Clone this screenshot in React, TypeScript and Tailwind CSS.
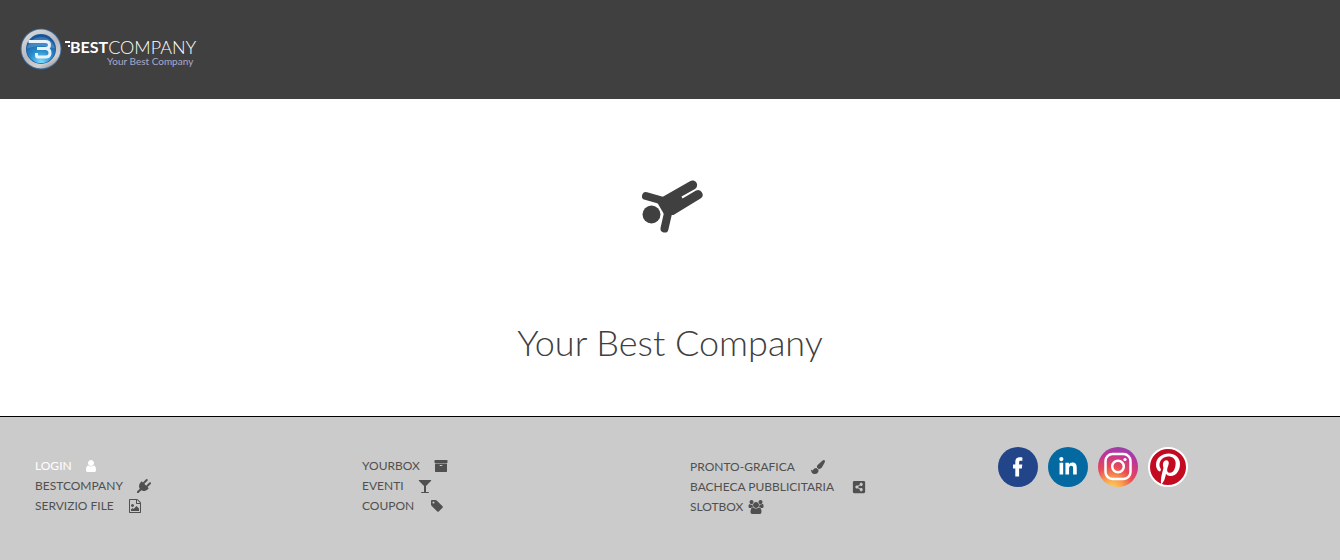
import type { ReactNode } from "react";
import { FaShareAltSquare, FaLinkedinIn, FaPinterestP } from "react-icons/fa";

type GlyphProps = { d: string; wide?: boolean };

function Glyph({ d, wide = false }: GlyphProps) {
  return (
    <svg
      aria-hidden="true"
      viewBox={wide ? "0 0 1920 1792" : "0 0 1792 1792"}
      className={wide ? "h-3.5 w-4 fill-current" : "size-3.5 fill-current"}
    >
      <path d={d} />
    </svg>
  );
}

const icons = {
  user: "M1536 1399q0 109-62.5 187t-150.5 78h-854q-88 0-150.5-78t-62.5-187q0-85 8.500-160.500t31.500-152 58.500-131 94-89 134.500-34.500q131 128 313 128t313-128q76 0 134.500 34.500t94 89 58.500 131 31.500 152 8.500 160.500zm-256-887q0 159-112.500 271.500t-271.500 112.500-271.500-112.500-112.500-271.500 112.500-271.500 271.500-112.500 271.500 112.500 112.500 271.500z",
  plug: "M1755 453q37 38 37 90.5t-37 90.5l-401 400 150 150-160 160q-163 163-389.5 186.5t-411.5-100.5l-362 362h-181v-181l362-362q-124-185-100.5-411.5t186.5-389.5l160-160 150 150 400-401q38-37 91-37t90 37 37 90.5-37 90.5l-400 401 234 234 401-400q38-37 91-37t90 37z",
  image: "M1596 380q28 28 48 76t20 88v1152q0 40-28 68t-68 28h-1344q-40 0-68-28t-28-68v-1600q0-40 28-68t68-28h896q40 0 88 20t76 48zm-444-244v376h376q-10-29-22-41l-313-313q-12-12-41-22zm384 1528v-1024h-416q-40 0-68-28t-28-68v-416h-768v1536h1280zm-128-448v320h-1024v-192l192-192 128 128 384-384zm-832-192q-80 0-136-56t-56-136 56-136 136-56 136 56 56 136-56 136-136 56z",
  archive: "M1088 832q0-26-19-45t-45-19h-256q-26 0-45 19t-19 45 19 45 45 19h256q26 0 45-19t19-45zm576-192v960q0 26-19 45t-45 19h-1408q-26 0-45-19t-19-45v-960q0-26 19-45t45-19h1408q26 0 45 19t19 45zm64-448v256q0 26-19 45t-45 19h-1536q-26 0-45-19t-19-45v-256q0-26 19-45t45-19h1536q26 0 45 19t19 45z",
  glass: "M1699 186q0 35-43 78l-632 632v768h320q26 0 45 19t19 45-19 45-45 19h-896q-26 0-45-19t-19-45 19-45 45-19h320v-768l-632-632q-43-43-43-78 0-23 18-36.5t38-17.5 43-4h1408q23 0 43 4t38 17.5 18 36.5z",
  tag: "M576 448q0-53-37.5-90.5t-90.5-37.5-90.5 37.5-37.5 90.5 37.5 90.5 90.5 37.5 90.5-37.5 37.5-90.5zm1067 576q0 53-37 90l-491 492q-39 37-91 37-53 0-90-37l-715-716q-38-37-64.5-101t-26.5-117v-416q0-52 38-90t90-38h416q53 0 117 26.5t102 64.5l715 714q37 39 37 91z",
  brush: "M1615 0q70 0 122.5 46.5t52.5 116.5q0 63-45 151-332 629-465 752-97 91-218 91-126 0-216.5-92.5t-90.5-219.5q0-128 92-212l638-579q59-54 130-54zm-909 1034q39 76 106.5 130t150.5 76l1 71q4 213-129.5 347t-348.5 134q-123 0-218-46.5t-152.5-127.5-86.5-183-29-220q7 5 41 30t62 44.5 59 36.5 46 17q41 0 55-37 25-66 57.5-112.5t69.5-76 88-47.5 103-25.5 125-10.5z",
  users: "M593 896q-162 5-265 128h-134q-82 0-138-40.5t-56-118.5q0-353 124-353 6 0 43.5 21t97.5 42.5 119 21.5q67 0 133-23-5 37-5 66 0 159 93 293zm1071 637q0 120-73 189.5t-194 69.5h-874q-121 0-194-69.5t-73-189.5q0-53 3.5-103.5t14-109 26.5-108.5 43-97.5 62-81 85.5-53.5 111.5-20q10 0 43 21.5t73 48 107 48 135 21.5 135-21.5 107-48 73-48 43-21.5q61 0 111.5 20t85.5 53.5 62 81 43 97.5 26.5 108.5 14 109 3.5 103.5zm-1024-1277q0 106-75 181t-181 75-181-75-75-181 75-181 181-75 181 75 75 181zm704 384q0 159-112.5 271.5t-271.5 112.5-271.5-112.5-112.5-271.5 112.5-271.5 271.5-112.5 271.5 112.5 112.5 271.5zm576 225q0 78-56 118.5t-138 40.5h-134q-103-123-265-128 93-134 93-293 0-29-5-66 66 23 133 23 59 0 119-21.5t97.5-42.5 43.5-21q124 0 124 353zm-128-609q0 106-75 181t-181 75-181-75-75-181 75-181 181-75 181 75 75 181z",
};

function Emblem() {
  return (
    <svg aria-hidden="true" viewBox="0 0 42 42" className="size-[42px]">
      <defs>
        <linearGradient id="ring" x1="0.2" y1="0" x2="0.8" y2="1">
          <stop offset="0" stopColor="#d9dadb" />
          <stop offset="0.5" stopColor="#b9b9bd" />
          <stop offset="0.8" stopColor="#d3d0d0" />
          <stop offset="1" stopColor="#8f8f96" />
        </linearGradient>
        <radialGradient id="orb" cx="0.5" cy="0.95" r="0.85">
          <stop offset="0" stopColor="#7ddcfa" />
          <stop offset="0.45" stopColor="#2b8fd0" />
          <stop offset="1" stopColor="#14559c" />
        </radialGradient>
      </defs>
      <circle cx="21" cy="21" r="20.500" fill="#3a6a9b" />
      <circle cx="21" cy="21" r="19.500" fill="url(#ring)" />
      <circle cx="21" cy="21" r="15" fill="#1c5c9f" />
      <circle cx="21" cy="21" r="14.300" fill="url(#orb)" />
      <path d="M7 20.500A14.300 14.300 0 0 1 35 20.500Q21 15 7 20.500z" fill="white" opacity="0.18" />
      <path d="M8.500 13.500H25q4.500 0 4.500 3.500T25.500 20.500H17M25.500 20.500Q30 21 30 25t-4.500 4H18q-1.500 0-1.500-2v-2" fill="none" stroke="#e9f2fa" strokeWidth="3" />
    </svg>
  );
}

function Logo() {
  return (
    <a href="#home" className="flex items-center gap-[3px] pb-[2px]">
      <Emblem />
      <span className="flex flex-col items-end pt-2">
        <span className="flex items-center leading-4 text-white">
          <svg aria-hidden="true" viewBox="0 0 5 12" className="h-3 w-[5px]">
            <path d="M0 1h5M3 5h2" stroke="white" strokeWidth="2" />
          </svg>
          <span className="text-base leading-4 font-bold">BEST</span>
          <span className="text-lg leading-4 font-light">COMPANY</span>
        </span>
        <span className="pr-[3px] text-[10px] leading-3 text-[#a9a9cf]">Your Best Company</span>
      </span>
    </a>
  );
}

function Tumbler() {
  return (
    <svg aria-hidden="true" viewBox="0 0 72 64" className="h-16 w-[72px]">
      <g transform="translate(3.500 0)">
        <circle cx="14" cy="40.500" r="9" fill="#404040" />
        <path d="M8.500 22 26 27M31 37 27 54.500" stroke="#404040" strokeWidth="8" strokeLinecap="round" />
        <path d="M24 23.500 52.500 7.200a4.600 4.600 0 0 1 5 7.800L44 22.400l1 2 13.500-7.900a4.600 4.600 0 0 1 4.500 8L36 41 27 41 20 29z" fill="#404040" />
      </g>
    </svg>
  );
}

function FacebookMark() {
  return (
    <svg aria-hidden="true" viewBox="0 0 40 40" className="size-10 fill-white">
      <path d="M17.300 29.500V21.500H15V17.500h2.300v-2.500c0-3.200 1.800-4.800 4.700-4.800 1 0 1.900.1 2.400.2v3.400h-1.700c-1.300 0-1.600.7-1.600 1.600v2.100h3.200l-.5 4h-2.700V29.500z" />
    </svg>
  );
}

function InstagramMark() {
  return (
    <svg aria-hidden="true" viewBox="0 0 40 40" className="size-10">
      <rect x="7.500" y="7" width="25" height="25" rx="7" fill="none" stroke="white" strokeWidth="2.500" />
      <circle cx="20" cy="19.500" r="5.800" fill="none" stroke="white" strokeWidth="2.500" />
      <circle cx="27" cy="12.500" r="1.600" fill="white" />
    </svg>
  );
}

type Item = { label: string; icon: ReactNode; gap: string; active?: boolean };

function LinkList({ items }: { items: Item[] }) {
  return (
    <ul className="flex flex-col">
      {items.map((item) => (
        <li key={item.label} className="flex h-5">
          <a
            href={"#" + item.label.toLowerCase().replace(" ", "-")}
            className={`inline-flex items-center text-xs leading-5 ${item.gap} ${item.active ? "text-white" : "text-[#505050]"}`}
          >
            {item.label}
            {item.icon}
          </a>
        </li>
      ))}
    </ul>
  );
}

const social = [
  { name: "Facebook", style: "bg-[#224488]", icon: <FacebookMark /> },
  { name: "LinkedIn", style: "bg-[#0569a1]", icon: <FaLinkedinIn className="size-5" /> },
  { name: "Instagram", style: "bg-[radial-gradient(circle_at_35%_105%,#fdd567_0%,#f9a04c_22%,#e94a55_45%,#c13595_70%,#7547c4_100%)]", icon: <InstagramMark /> },
  { name: "Pinterest", style: "border-2 border-white bg-[#c40a20]", icon: <FaPinterestP className="mt-1 size-8" /> },
];

export default function App() {
  return (
    <div className="flex min-h-screen flex-col bg-white font-['Lato',sans-serif]">
      <header className="flex h-[99px] items-center bg-[#404040] px-5">
        <Logo />
      </header>
      <main className="flex flex-col items-center pt-[75px] pb-12">
        <Tumbler />
        <h1 className="mt-[79px] mb-px text-4xl leading-[50px] font-light text-[#404040]">Your Best Company</h1>
      </main>
      <footer className="grid flex-1 grid-cols-[327fr_328fr_308fr_342fr] border-t border-black bg-[#cbcbcb] pt-[30px] pl-[35px]">
        <div className="pt-[9px]">
          <LinkList
            items={[
              { label: "LOGIN", icon: <Glyph d={icons.user} />, gap: "gap-3", active: true },
              { label: "BESTCOMPANY", icon: <Glyph d={icons.plug} />, gap: "gap-[14px]" },
              { label: "SERVIZIO FILE", icon: <Glyph d={icons.image} />, gap: "gap-[14px]" },
            ]}
          />
        </div>
        <div className="pt-[9px]">
          <LinkList
            items={[
              { label: "YOURBOX", icon: <Glyph d={icons.archive} />, gap: "gap-[14px]" },
              { label: "EVENTI", icon: <Glyph d={icons.glass} />, gap: "gap-[14px]" },
              { label: "COUPON", icon: <Glyph d={icons.tag} />, gap: "gap-4" },
            ]}
          />
        </div>
        <div className="pt-[10px]">
          <LinkList
            items={[
              { label: "PRONTO-GRAFICA", icon: <Glyph d={icons.brush} />, gap: "gap-4" },
              { label: "BACHECA PUBBLICITARIA", icon: <FaShareAltSquare className="size-3.5" />, gap: "gap-[18px]" },
              { label: "SLOTBOX", icon: <Glyph d={icons.users} wide />, gap: "gap-[5px]" },
            ]}
          />
        </div>
        <div className="flex gap-[10px]">
          {social.map((s) => (
            <a
              key={s.name}
              href={"#" + s.name.toLowerCase()}
              aria-label={s.name}
              className={`flex size-10 items-center justify-center rounded-full text-white ${s.style}`}
            >
              {s.icon}
            </a>
          ))}
        </div>
      </footer>
    </div>
  );
}
